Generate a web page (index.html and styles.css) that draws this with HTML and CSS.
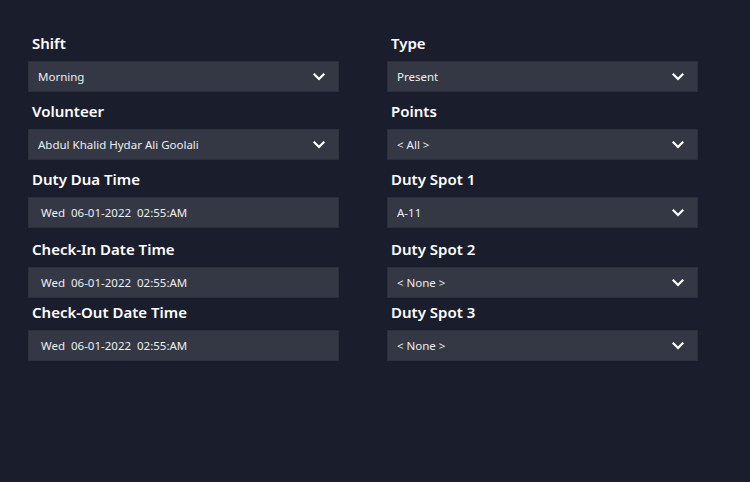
FILE: index.html
```html
<!DOCTYPE html>
<html>
<head>
<meta charset="utf-8">
<link rel="stylesheet" href="styles.css">
</head>
<body>
<div class="form">
  <div class="row">
    <div class="field">
      <div class="label">Shift</div>
      <div class="select"><span class="value">Morning</span><svg class="chev" width="12" height="8" viewBox="0 0 12 8"><polyline points="1.5,1.5 6,6 10.5,1.5"/></svg></div>
    </div>
    <div class="field">
      <div class="label">Type</div>
      <div class="select"><span class="value">Present</span><svg class="chev" width="12" height="8" viewBox="0 0 12 8"><polyline points="1.5,1.5 6,6 10.5,1.5"/></svg></div>
    </div>
  </div>
  <div class="row gap-md">
    <div class="field">
      <div class="label">Volunteer</div>
      <div class="select"><span class="value">Abdul Khalid Hydar Ali Goolali</span><svg class="chev" width="12" height="8" viewBox="0 0 12 8"><polyline points="1.5,1.5 6,6 10.5,1.5"/></svg></div>
    </div>
    <div class="field">
      <div class="label">Points</div>
      <div class="select"><span class="value">&lt; All &gt;</span><svg class="chev" width="12" height="8" viewBox="0 0 12 8"><polyline points="1.5,1.5 6,6 10.5,1.5"/></svg></div>
    </div>
  </div>
  <div class="row gap-md">
    <div class="field">
      <div class="label">Duty Dua Time</div>
      <div class="date"><span class="value">Wed  06-01-2022  02:55:AM</span></div>
    </div>
    <div class="field">
      <div class="label">Duty Spot 1</div>
      <div class="select"><span class="value">A-11</span><svg class="chev" width="12" height="8" viewBox="0 0 12 8"><polyline points="1.5,1.5 6,6 10.5,1.5"/></svg></div>
    </div>
  </div>
  <div class="row gap-lg">
    <div class="field">
      <div class="label">Check-In Date Time</div>
      <div class="date"><span class="value">Wed  06-01-2022  02:55:AM</span></div>
    </div>
    <div class="field">
      <div class="label">Duty Spot 2</div>
      <div class="select"><span class="value">&lt; None &gt;</span><svg class="chev" width="12" height="8" viewBox="0 0 12 8"><polyline points="1.5,1.5 6,6 10.5,1.5"/></svg></div>
    </div>
  </div>
  <div class="row gap-sm">
    <div class="field">
      <div class="label">Check-Out Date Time</div>
      <div class="date"><span class="value">Wed  06-01-2022  02:55:AM</span></div>
    </div>
    <div class="field">
      <div class="label">Duty Spot 3</div>
      <div class="select"><span class="value">&lt; None &gt;</span><svg class="chev" width="12" height="8" viewBox="0 0 12 8"><polyline points="1.5,1.5 6,6 10.5,1.5"/></svg></div>
    </div>
  </div>
</div>
</body>
</html>
```
FILE: styles.css
```css
html, body {
  margin: 0;
  padding: 0;
  background: #1a1e2c;
  width: 750px;
  height: 482px;
  overflow: hidden;
  font-family: "Noto Sans", "Open Sans", sans-serif;
}
.form {
  padding: 33px 0 0 28px;
}
.row {
  display: grid;
  grid-template-columns: 311px 311px;
  column-gap: 48px;
}
.gap-md { margin-top: 9px; }
.gap-lg { margin-top: 11px; }
.gap-sm { margin-top: 4px; }
.label {
  height: 20px;
  line-height: 20px;
  padding-left: 4px;
  margin-bottom: 8px;
  font-size: 15px;
  font-weight: 600;
  color: #ffffff;
}
.select, .date {
  box-sizing: border-box;
  height: 31px;
  display: flex;
  align-items: center;
  background: #333844;
  border: 1px solid #2b303c;
  color: #eceef2;
  font-size: 11.5px;
}
.select {
  justify-content: space-between;
  padding: 0 13px 0 9px;
}
.date {
  padding: 0 12px;
}
.value {
  white-space: pre;
}
.chev {
  fill: none;
  stroke: #ffffff;
  stroke-width: 2.2;
  stroke-linecap: square;
}
```
